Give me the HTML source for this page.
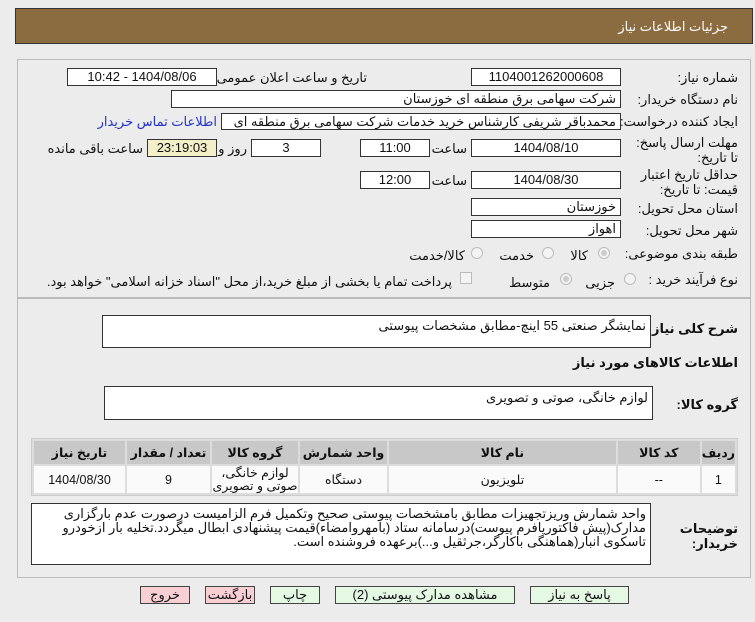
<!DOCTYPE html>
<html><head><meta charset="utf-8"><style>
*{box-sizing:border-box;margin:0;padding:0}
body{width:755px;height:622px;background:#ececec;font-family:"Liberation Sans","DejaVu Sans",sans-serif;font-size:12.5px;color:#111;position:relative;overflow:hidden;direction:rtl}
.a{position:absolute;white-space:nowrap}
.box{position:absolute;background:#fff;border:1px solid #333;padding:0 4px;line-height:16px;font-size:13px}
.c{text-align:center}
.lbl{position:absolute;white-space:nowrap;font-size:13px}
.panel{position:absolute;border:1px solid #bbb;background:#ececec}
.rad{position:absolute;width:12px;height:12px;border:1px solid #bbb;border-radius:50%;background:#f4f4f4}
.rad.on::after{content:"";position:absolute;left:2px;top:2px;width:6px;height:6px;border-radius:50%;background:#ccc}
table{position:absolute;border-collapse:separate;border-spacing:2px;background:#ddd;border:1px solid #ccc}
th{background:#c8c8c8;font-weight:bold;height:23px;font-size:12.5px}
td{background:#fafafa;text-align:center;height:27px;font-size:12.5px}
.btn{position:absolute;top:586px;height:18px;border:1px solid #444;text-align:center;line-height:16px;font-size:13px}
</style></head><body>
<div class="a" style="left:15px;top:8px;width:738px;height:36px;background:#8b6b40;border:1px solid #333"></div>
<div class="a" style="right:27px;top:19px;color:#fff;font-size:13px">جزئیات اطلاعات نیاز</div>

<div class="panel" style="left:17px;top:59px;width:734px;height:239px"></div>
<div class="panel" style="left:17px;top:298px;width:734px;height:280px"></div>

<div class="lbl" style="right:17px;top:70px">شماره نیاز:</div>
<div class="box c" style="left:471px;top:68px;width:150px;height:18px">1104001262000608</div>
<div class="lbl" style="right:388px;top:70px">تاریخ و ساعت اعلان عمومی:</div>
<div class="box c" style="left:67px;top:68px;width:150px;height:18px">1404/08/06 - 10:42</div>

<div class="lbl" style="right:17px;top:92px">نام دستگاه خریدار:</div>
<div class="box" style="left:171px;top:90px;width:450px;height:18px">شرکت سهامی برق منطقه ای خوزستان</div>

<div class="lbl" style="right:17px;top:114px">ایجاد کننده درخواست:</div>
<div class="box" style="left:221px;top:113px;width:400px;height:17px;overflow:hidden">محمدباقر شریفی کارشناس خرید خدمات شرکت سهامی برق منطقه ای خوزستان</div>
<div class="lbl" style="right:538px;top:114px;color:#2233cc">اطلاعات تماس خریدار</div>

<div class="lbl" style="right:17px;top:135px;line-height:15px;white-space:normal;width:110px">مهلت ارسال پاسخ: تا تاریخ:</div>
<div class="box c" style="left:471px;top:139px;width:150px;height:18px">1404/08/10</div>
<div class="lbl" style="right:288px;top:141px">ساعت</div>
<div class="box c" style="left:360px;top:139px;width:70px;height:18px">11:00</div>
<div class="box c" style="left:251px;top:139px;width:70px;height:18px">3</div>
<div class="lbl" style="right:508px;top:141px">روز و</div>
<div class="box c" style="left:147px;top:139px;width:70px;height:18px;background:#f3efc8">23:19:03</div>
<div class="lbl" style="right:612px;top:141px">ساعت باقی مانده</div>

<div class="lbl" style="right:17px;top:167px;line-height:15px;white-space:normal;width:110px">حداقل تاریخ اعتبار قیمت: تا تاریخ:</div>
<div class="box c" style="left:471px;top:171px;width:150px;height:18px">1404/08/30</div>
<div class="lbl" style="right:288px;top:173px">ساعت</div>
<div class="box c" style="left:360px;top:171px;width:70px;height:18px">12:00</div>

<div class="lbl" style="right:17px;top:201px">استان محل تحویل:</div>
<div class="box" style="left:471px;top:198px;width:150px;height:18px">خوزستان</div>
<div class="lbl" style="right:17px;top:223px">شهر محل تحویل:</div>
<div class="box" style="left:471px;top:220px;width:150px;height:18px">اهواز</div>

<div class="lbl" style="right:17px;top:246px">طبقه بندی موضوعی:</div>
<div class="rad on" style="left:598px;top:247px"></div><div class="lbl" style="right:167px;top:248px">کالا</div>
<div class="rad" style="left:542px;top:247px"></div><div class="lbl" style="right:221px;top:248px">خدمت</div>
<div class="rad" style="left:471px;top:247px"></div><div class="lbl" style="right:290px;top:248px">کالا/خدمت</div>

<div class="lbl" style="right:17px;top:272px">نوع فرآیند خرید :</div>
<div class="rad" style="left:624px;top:273px"></div><div class="lbl" style="right:140px;top:275px">جزیی</div>
<div class="rad on" style="left:560px;top:273px"></div><div class="lbl" style="right:205px;top:275px">متوسط</div>
<div class="a" style="left:460px;top:272px;width:12px;height:12px;border:1px solid #bbb;background:#f4f4f4"></div>
<div class="lbl" style="right:303px;top:274px">پرداخت تمام یا بخشی از مبلغ خرید،از محل "اسناد خزانه اسلامی" خواهد بود.</div>

<div class="lbl" style="right:17px;top:321px;font-weight:bold">شرح کلی نیاز:</div>
<div class="box" style="left:102px;top:315px;width:549px;height:33px;line-height:20px">نمایشگر صنعتی 55 اینچ-مطابق مشخصات پیوستی</div>
<div class="lbl" style="right:17px;top:355px;font-weight:bold">اطلاعات کالاهای مورد نیاز</div>
<div class="lbl" style="right:17px;top:397px;font-weight:bold">گروه کالا:</div>
<div class="box" style="left:104px;top:386px;width:549px;height:34px;line-height:22px">لوازم خانگی، صوتی و تصویری</div>

<table style="left:31px;top:438px;width:707px">
<tr><th style="width:27px">ردیف</th><th style="width:82px">کد کالا</th><th>نام کالا</th><th style="width:87px">واحد شمارش</th><th style="width:86px">گروه کالا</th><th style="width:83px">تعداد / مقدار</th><th style="width:91px">تاریخ نیاز</th></tr>
<tr><td>1</td><td>--</td><td>تلویزیون</td><td>دستگاه</td><td style="line-height:13px">لوازم خانگی، صوتی و تصویری</td><td>9</td><td>1404/08/30</td></tr>
</table>

<div class="lbl" style="right:17px;top:521px;font-weight:bold;line-height:15px;white-space:normal;width:60px">توضیحات خریدار:</div>
<div class="box" style="left:31px;top:503px;width:620px;height:62px;white-space:normal;line-height:14px;padding-top:3px">واحد شمارش وریزتجهیزات مطابق بامشخصات پیوستی صحیح وتکمیل فرم الزامیست درصورت عدم بارگزاری مدارک(پیش فاکتوریافرم پیوست)درسامانه ستاد (بامهروامضاء)قیمت پیشنهادی ابطال میگردد.تخلیه بار ازخودرو تاسکوی انبار(هماهنگی باکارگر،جرثقیل و...)برعهده فروشنده است.</div>

<div class="btn" style="left:530px;width:99px;background:#e4f8e4">پاسخ به نیاز</div>
<div class="btn" style="left:335px;width:180px;background:#e4f8e4">مشاهده مدارک پیوستی (2)</div>
<div class="btn" style="left:270px;width:50px;background:#e4f8e4">چاپ</div>
<div class="btn" style="left:205px;width:50px;background:#f8d0d4">بازگشت</div>
<div class="btn" style="left:140px;width:50px;background:#f8d0d4">خروج</div>
</body></html>
